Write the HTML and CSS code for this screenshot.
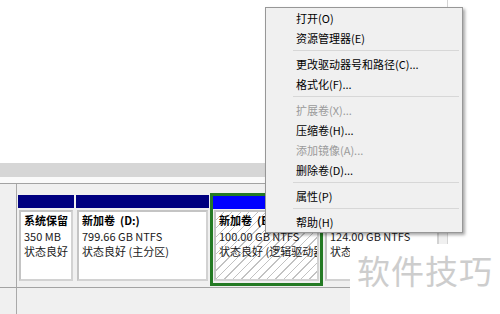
FILE: index.html
```html
<!DOCTYPE html>
<html lang="zh-CN">
<head>
  <meta charset="UTF-8" />
  <title>磁盘管理</title>
  <link rel="stylesheet" href="styles.css">
</head>
<body>
  <div class="window">
    <div class="volume-list"></div>
    <div class="splitter"></div>
    <div class="gap"></div>

    <div class="disk">
      <div class="disk-label"></div>
      <div class="parts">
        <div class="part p-sys">
          <div class="part-head"></div>
          <div class="part-body">
            <b>系统保留</b>
            <span>350 MB</span>
            <span>状态良好</span>
          </div>
        </div>
        <div class="part p-d">
          <div class="part-head"></div>
          <div class="part-body">
            <b>新加卷 &nbsp;(D:)</b>
            <span>799.66 GB NTFS</span>
            <span>状态良好 (主分区)</span>
          </div>
        </div>
        <div class="part p-e logical selected">
          <div class="part-head"></div>
          <div class="part-body">
            <b>新加卷 &nbsp;(E:)</b>
            <span>100.00 GB NTFS</span>
            <span>状态良好 (逻辑驱动器)</span>
          </div>
        </div>
        <div class="part p-f logical">
          <div class="part-head"></div>
          <div class="part-body">
            <b>新加卷 &nbsp;(F:)</b>
            <span>124.00 GB NTFS</span>
            <span>状态良好 (逻辑驱动器)</span>
          </div>
        </div>
      </div>
    </div>

    <div class="disk disk-next">
      <div class="disk-label"></div>
      <div class="parts"></div>
    </div>
  </div>

  <!-- context menu -->
  <ul class="menu">
    <li>打开(O)</li>
    <li>资源管理器(E)</li>
    <li class="sep"></li>
    <li>更改驱动器号和路径(C)...</li>
    <li>格式化(F)...</li>
    <li class="sep"></li>
    <li class="off">扩展卷(X)...</li>
    <li>压缩卷(H)...</li>
    <li class="off">添加镜像(A)...</li>
    <li>删除卷(D)...</li>
    <li class="sep"></li>
    <li>属性(P)</li>
    <li class="sep"></li>
    <li>帮助(H)</li>
  </ul>

  <div class="watermark">软件技巧</div>
</body>
</html>
```

FILE: styles.css
```css
body {
  margin: 0;
  width: 500px;
  height: 314px;
  overflow: hidden;
  position: relative;
  background: #fff;
  font-family: "Noto Sans CJK SC", "Noto Sans", sans-serif;
  font-size: 11px;
  color: #000;
}

.window {
  width: 447px;
  height: 314px;
  border-right: 1px solid #d4d4d4;
  overflow: hidden;
}

.volume-list {
  height: 163px;
  background: #fff;
}

.splitter {
  height: 14px;
  background: #d6d6d6;
}

.gap {
  height: 6px;
  background: #fafafa;
  border-bottom: 1px solid #a3a3a3;
}

.disk {
  display: flex;
  background: #f0f0f0;
  border-bottom: 1px solid #a3a3a3;
}

.disk-label {
  width: 16px;
  border-right: 1px solid #a9a9a9;
  background: #f0f0f0;
}

.parts {
  flex: 1;
  display: flex;
  height: 93px;
  padding: 9px 0 1px;
  overflow: hidden;
}

.part {
  display: flex;
  flex-direction: column;
  flex-shrink: 0;
  border: 1px solid transparent;
  margin: 1px 0;
}

.p-sys { width: 56px; }
.p-d { width: 133px; }
.p-e { width: 107px; }
.p-f { width: 116px; }

.part-head {
  height: 13px;
  background: #000080;
}

.part.logical .part-head {
  background: #0000ff;
}

.part-body {
  flex: 1;
  margin: 2px 1px 3px;
  padding: 1px 3px 0;
  background: #fff;
  border: 2px solid #d2d2d2;
  border-top-color: #c4c4c4;
  border-left-color: #c4c4c4;
  display: flex;
  flex-direction: column;
  line-height: 15.5px;
  white-space: nowrap;
  overflow: hidden;
  color: #1a1a1a;
}

.part-body b {
  font-weight: 700;
  color: #000;
}

.part.selected {
  border: 3px solid #247a24;
  margin: 0;
}

.part.selected .part-body {
  margin: 1px 1px 2px;
  background: repeating-linear-gradient(135deg, #fff 0 5px, #c2c2c2 5px 6px);
}

.disk-next {
  border-bottom: none;
  height: 26px;
}

.disk-next .parts {
  height: auto;
  padding: 0;
}

.menu {
  position: absolute;
  left: 265px;
  top: 7px;
  width: 196px;
  margin: 0;
  padding: 0;
  list-style: none;
  background: #f0f0f0;
  border: 1px solid #979797;
  box-shadow: 2px 2px 3px rgba(0, 0, 0, 0.35);
}

.menu li {
  height: 20px;
  line-height: 20px;
  padding-left: 30px;
  white-space: nowrap;
}

.menu li.off {
  color: #9a9a9a;
}

.menu li.sep {
  height: 1px;
  padding: 0;
  margin: 2px 3px 3px 27px;
  background: #d7d7d7;
}

.watermark {
  position: absolute;
  left: 350px;
  top: 244px;
  right: 0;
  bottom: 0;
  background: #fff;
  padding: 9px 0 0 7px;
  font-size: 33px;
  line-height: 34px;
  letter-spacing: 1px;
  color: #cdcdcd;
  white-space: nowrap;
}
```
